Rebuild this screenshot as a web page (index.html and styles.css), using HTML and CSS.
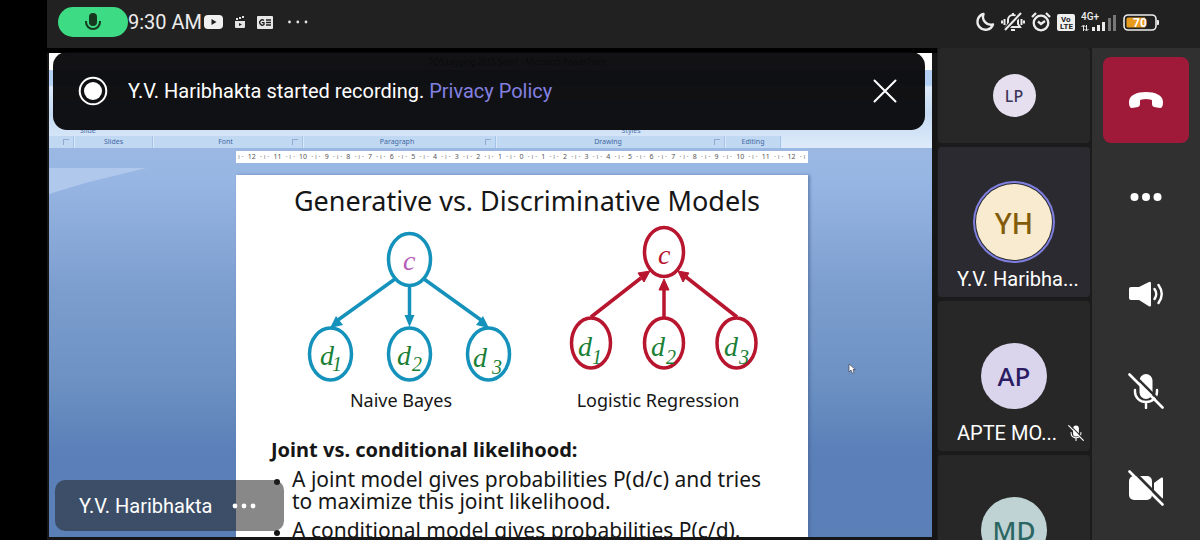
FILE: index.html
```html
<!DOCTYPE html>
<html lang="en">
<head>
<meta charset="utf-8">
<meta name="viewport" content="width=device-width, initial-scale=1">
<title>Meeting</title>
<link rel="stylesheet" href="styles.css">
</head>
<body>
<div class="app">
  <header class="status">
    <div class="status-left">
      <span class="mic-pill">
        <svg width="18" height="20" viewBox="0 0 18 20"><rect x="5" y="1" width="8" height="13" rx="4" fill="#17381f"/><path d="M2 9v1a7 7 0 0 0 14 0V9" fill="none" stroke="#17381f" stroke-width="2"/></svg>
      </span>
      <time class="clock">9:30 AM</time>
      <svg class="s-video" width="19" height="14" viewBox="0 0 19 14"><rect width="19" height="14" rx="4" fill="#f1f1f1"/><path d="M7.500 4v6l5-3z" fill="#222"/></svg>
      <svg class="s-clap" width="10" height="12" viewBox="0 0 10 12"><path d="M0 5h10v6q0 1-1 1H1q-1 0-1-1zM1 2h2v2H1zM4 1h2v2H4zM7 0h2v2H7z" fill="#e4e4e4"/><path d="M4 7v3l3-1.500z" fill="#222"/></svg>
      <svg class="s-news" width="16" height="13" viewBox="0 0 16 13"><rect width="16" height="13" rx="1" fill="#e8e8e8"/><path d="M7 4.500A2.600 2.600 0 1 0 7 8.500V6.700H4.800M9 4h5M9 6.500h5M9 9h5" fill="none" stroke="#222" stroke-width="1.300"/></svg>
      <svg class="s-more" width="20" height="4" viewBox="0 0 20 4" fill="#e4e4e4"><circle cx="1.500" cy="2" r="1.400"/><circle cx="9.800" cy="2" r="1.400"/><circle cx="18" cy="2" r="1.400"/></svg>
    </div>
    <div class="status-right">
      <svg width="20" height="20" viewBox="0 0 20 20"><path d="M8.500 2A8 8 0 1 0 18 12.500 8 8 0 0 1 8.500 2z" fill="none" stroke="#ececec" stroke-width="2.400" stroke-linejoin="round"/></svg>
      <svg width="24" height="20" viewBox="0 0 24 20" fill="none" stroke="#ececec" stroke-width="2"><path d="M5 15h14l-2-3V8a5 5 0 0 0-10 0v4z"/><path d="M10 18h4M12 3V1M3.500 7v6M1 8.500v3M20.500 7v6M23 8.500v3"/><path d="M20 1 4 18" stroke="#222" stroke-width="4.500"/><path d="M20 1 4 18"/></svg>
      <svg width="20" height="20" viewBox="0 0 20 20" fill="none" stroke="#ececec" stroke-width="2.300"><circle cx="10" cy="11" r="7.300"/><path d="M1 5l4-4M19 5l-4-4M7 9.500l3 2.500 4-3"/></svg>
      <svg width="18" height="17" viewBox="0 0 18 17"><rect width="18" height="17" rx="2" fill="#f0f0f0"/><text x="4" y="8" class="t-lte">Vo</text><text x="3" y="15" class="t-lte">LTE</text></svg>
      <svg class="s-signal" width="36" height="20" viewBox="0 0 36 20"><text x="0" y="8" class="t-4g">4G+</text><path d="M2.500 19v-5M5.500 13v5M0.500 15l2-2 2 2M3.500 17l2 2 2-2" stroke="#ececec" fill="none"/><path d="M11 15h3v4h-3zM16 13h3v6h-3zM21 10h3v9h-3z" fill="#ececec"/><path d="M27 6h3v13h-3zM32 3h3v16h-3z" fill="#777"/></svg>
      <svg class="s-battery" width="37" height="17" viewBox="0 0 37 17"><rect x="1" y="1" width="32" height="15" rx="4" fill="none" stroke="#ececec" stroke-width="1.600"/><path d="M5 3.500h17v10H5q-1.500 0-1.500-1.500V5Q3.500 3.500 5 3.500z" fill="#e89c1d"/><path d="M34 6h1q1 0 1 1v3q0 1-1 1h-1z" fill="#ececec"/><text x="17" y="13" text-anchor="middle" class="t-bat">70</text></svg>
    </div>
  </header>

  <div class="body">
    <main class="stage">
      <section class="shared">
        <div class="ribbon">
          <div class="win-title">POS tagging 2015 Sem1 - Microsoft PowerPoint</div>
          <div class="tools"><span class="t-slide">Slide</span><span class="t-styles">Styles</span></div>
          <div class="groups">
            <span class="more"></span><span>Slides</span><span class="more">Font</span><span class="more">Paragraph</span><span class="more">Drawing</span><span>Editing</span>
          </div>
        </div>
        <div class="desk">
          <div class="ruler"><i>ı ·</i>12<i>· ı ·</i>11<i>· ı ·</i>10<i>· ı ·</i>9<i>· ı ·</i>8<i>· ı ·</i>7<i>· ı ·</i>6<i>· ı ·</i>5<i>· ı ·</i>4<i>· ı ·</i>3<i>· ı ·</i>2<i>· ı ·</i>1<i>· ı ·</i>0<i>· ı ·</i>1<i>· ı ·</i>2<i>· ı ·</i>3<i>· ı ·</i>4<i>· ı ·</i>5<i>· ı ·</i>6<i>· ı ·</i>7<i>· ı ·</i>8<i>· ı ·</i>9<i>· ı ·</i>10<i>· ı ·</i>11<i>· ı ·</i>12<i>· ı</i></div>
          <article class="slide">
            <h1>Generative vs. Discriminative Models</h1>
            <svg class="diagram" viewBox="236 223 572 192">
              <g fill="none" stroke="#1592bb" stroke-width="3.500">
                <ellipse cx="409.500" cy="259.500" rx="21" ry="26"/><ellipse cx="330.500" cy="354" rx="21" ry="26"/><ellipse cx="409.500" cy="354" rx="21" ry="26"/><ellipse cx="488.500" cy="354" rx="21" ry="26"/>
                <path d="M395 279 338 320M409.500 286v32M424 279l57 41"/>
              </g>
              <path d="M330 328l6-12 7 9zM409.500 327l-5-12h10zM489 328l-6-12-7 9z" fill="#1592bb"/>
              <g fill="none" stroke="#b8152f" stroke-width="3.500">
                <ellipse cx="664" cy="252" rx="19.500" ry="24.500"/><ellipse cx="591" cy="343" rx="19.500" ry="25"/><ellipse cx="664" cy="343" rx="19.500" ry="25"/><ellipse cx="736.500" cy="343" rx="19.500" ry="25"/>
                <path d="M591 317l50-39M664 317v-32M737 317l-51-40"/>
              </g>
              <path d="M650 271l-6 11-6-9zM664 279l5 11h-10zM678 271l11 2-6 9z" fill="#b8152f" stroke="#b8152f"/>
              <g class="t-math">
                <text x="403" y="270" fill="#b65cb8">c</text>
                <text x="658" y="264" fill="#b8152f">c</text>
                <text x="320" y="365">d</text><text x="332" y="371" class="sub">1</text>
                <text x="397" y="365">d</text><text x="412" y="371" class="sub">2</text>
                <text x="473" y="367">d</text><text x="492" y="374" class="sub">3</text>
                <text x="578" y="356">d</text><text x="592" y="364" class="sub">1</text>
                <text x="651" y="356">d</text><text x="666" y="364" class="sub">2</text>
                <text x="724" y="356">d</text><text x="739" y="364" class="sub">3</text>
              </g>
              <g class="t-cap" text-anchor="middle"><text x="401" y="407">Naive Bayes</text><text x="658" y="407">Logistic Regression</text></g>
            </svg>
            <h2>Joint vs. conditional likelihood:</h2>
            <ul>
              <li>A joint model gives probabilities P(d/c) and tries<br>to maximize this joint likelihood.</li>
              <li>A conditional model gives probabilities P(c/d).</li>
            </ul>
          </article>
        </div>
        <svg class="cursor" width="8" height="12" viewBox="0 0 8 12"><path d="M1 1v8l2-2 1.500 3.500 1.500-1L5 6.500h2.500z" fill="#fff" stroke="#445" stroke-width=".7"/></svg>
      </section>

      <div class="banner">
        <svg width="30" height="30" viewBox="0 0 30 30"><circle cx="15" cy="15" r="13.300" fill="none" stroke="#fff" stroke-width="2"/><circle cx="15" cy="15" r="9" fill="#fff"/></svg>
        <p>Y.V. Haribhakta started recording. <a href="#privacy">Privacy Policy</a></p>
        <button class="close" aria-label="Close"><svg width="24" height="24" viewBox="0 0 24 24"><path d="M1.500 1.500l21 21M22.500 1.500l-21 21" stroke="#fff" stroke-width="2" stroke-linecap="round"/></svg></button>
      </div>

      <div class="presenter">
        <span>Y.V. Haribhakta</span>
        <button aria-label="Presenter options"><svg width="24" height="6" viewBox="0 0 24 6" fill="#fff"><circle cx="3" cy="3" r="2.400"/><circle cx="12" cy="3" r="2.400"/><circle cx="21" cy="3" r="2.400"/></svg></button>
      </div>
    </main>

    <aside class="people">
      <div class="tile small"><span class="avatar lp">LP</span></div>
      <div class="tile active">
        <div class="face"><span class="avatar yh">YH</span></div>
        <div class="name">Y.V. Haribha...</div>
      </div>
      <div class="tile">
        <div class="face"><span class="avatar ap">AP</span></div>
        <div class="name">APTE MO...
          <svg width="16" height="16" viewBox="0 0 36 36"><use href="#mic-off"/></svg>
        </div>
      </div>
      <div class="tile">
        <div class="face"><span class="avatar md">MD</span></div>
      </div>
    </aside>

    <nav class="controls">
      <button class="hangup" aria-label="Leave"><svg width="36" height="18" viewBox="0 0 36 18"><path d="M18 1C27 1 35 4 35 11q0 6-3 6l-6-1q-2-.500-2-3V9.500Q23 8 18 8t-6 1.500V13q0 2.500-2 3l-6 1q-3 0-3-6C1 4 9 1 18 1z" fill="#fff"/></svg></button>
      <button aria-label="More"><svg width="32" height="10" viewBox="0 0 32 10" fill="#fff"><circle cx="4.500" cy="5" r="4"/><circle cx="16" cy="5" r="4"/><circle cx="27.500" cy="5" r="4"/></svg></button>
      <button aria-label="Speaker"><svg width="36" height="28" viewBox="0 0 36 28"><path d="M3 7h8L20.500 2.300Q23 1 23 3.500v21.500q0 2.500-2.500 1L11 20H3q-2 0-2-2V9q0-2 2-2z" fill="#fff"/><path d="M26.500 9q3.500 5 0 10M30.500 5q6.500 9 0 18" fill="none" stroke="#fff" stroke-width="2.400" stroke-linecap="round"/></svg></button>
      <button aria-label="Unmute"><svg width="36" height="36" viewBox="0 0 36 36"><g id="mic-off"><rect x="11.500" y="1" width="13" height="25" rx="6.500" fill="#fff"/><path d="M7 17v2a11 10 0 0 0 22 0v-2M18 29v6" fill="none" stroke="#fff" stroke-width="2.400" stroke-linecap="round"/><path d="M3.500-.500l34 34" stroke="#303030" stroke-width="2.600"/><path d="M1.500 1.500l33 33" stroke="#fff" stroke-width="2.600" stroke-linecap="round"/></g></svg></button>
      <button aria-label="Turn camera on"><svg width="36" height="36" viewBox="0 0 36 36"><rect x="1" y="6" width="23" height="24" rx="5" fill="#fff"/><path d="M26 13l7.500-5.500Q35 7 35 8.500v19q0 1.500-1.500 1L26 23z" fill="#fff"/><path d="M3.500-.500l34 34" stroke="#303030" stroke-width="3"/><path d="M1.500 1.500l33 33" stroke="#fff" stroke-width="2.600" stroke-linecap="round"/></svg></button>
    </nav>
  </div>
</div>
</body>
</html>
```
FILE: styles.css
```css
* { box-sizing: border-box; }
body { margin: 0; background: #000; font-family: Roboto, sans-serif; font-size: 20px; color: #fff; }
button { border: 0; padding: 0; background: none; color: inherit; display: flex; align-items: center; justify-content: center; }
svg { display: block; flex: none; }

.app { height: 100vh; padding-left: 47px; display: flex; flex-direction: column; overflow: hidden; }

.status { flex: none; height: 48px; padding: 0 40px 4px 11px; background: #212121; display: flex; align-items: center; justify-content: space-between; }
.status-left, .status-right { display: flex; align-items: center; }
.status-right { gap: 6px; }
.mic-pill { width: 70px; height: 30px; border-radius: 15px; background: #3ddc84; display: flex; align-items: center; justify-content: center; }
.clock { color: #ececec; margin-right: 2px; line-height: 24px; }
.s-clap { margin-left: 12px; }
.s-news { margin-left: 12px; }
.s-more { margin-left: 15px; }
.t-lte { font: 700 8px Roboto, sans-serif; fill: #222; }
.t-4g { font: 500 10px Roboto, sans-serif; fill: #ececec; }
.t-bat { font: 700 12px Roboto, sans-serif; fill: #fff; }

.body { flex: 1; min-height: 0; display: flex; background: #1b1b1b; }
.stage { flex: 1; min-width: 0; position: relative; display: flex; padding: 5px 5px 3px 2px; background: linear-gradient(#000 5px, #161616 5px); }
.shared { flex: 1; min-width: 0; display: flex; flex-direction: column; overflow: hidden; position: relative; font-family: "Noto Sans", sans-serif; }

.ribbon { flex: none; height: 95px; display: flex; flex-direction: column; background: linear-gradient(#fff 0 17px, #b4d0f5 17px 32px, #dce9f8 34px, #c6dbf3 60px, #dceafa 94px); }
.win-title { text-align: center; font-size: 8px; line-height: 18px; color: #222; padding-left: 54px; }
.tools { margin-top: auto; display: flex; justify-content: space-between; padding: 0 33% 0 31px; font-size: 7px; line-height: 10px; color: #4d74ab; }
.groups { display: grid; grid-template-columns: 25fr 78fr 149fr 192fr 228fr 55fr 150fr; gap: 1px; }
.groups span { height: 12px; background: #c1d8f2; border-right: 1px solid #a5c3e8; font-size: 7px; line-height: 12px; text-align: center; color: #3f68a4; }
.groups .more { display: flex; align-items: center; justify-content: center; }
.groups .more::before { content: ""; width: 5px; margin-right: auto; }
.groups .more::after { content: ""; width: 5px; height: 5px; margin: 0 4px 0 auto; border: 1px solid #8fabd0; border-right: 0; border-bottom: 0; }

.desk { position: relative; flex: 1; min-height: 0; display: grid; grid-template-columns: 187fr 572fr 124fr; grid-template-rows: 12px 1fr; row-gap: 12px; padding-top: 3px; background: linear-gradient(#9ab8e2, #98b6e3 8%, #7d9fd0 35%, #6c91c2 60%, #5b80b9 78%, #5b80b8); }
.desk::before { content: ""; position: absolute; left: 0; top: 20px; width: 11%; height: 26px; background: #b0c8ec; clip-path: polygon(0 0, 100% 0, 40% 55%, 0 100%); }
.ruler, .slide { grid-column: 2; }
.ruler { background: #fff; display: flex; justify-content: space-between; align-items: center; font-size: 7px; line-height: 12px; color: #555; padding: 0 2px; white-space: nowrap; }
.ruler i { font-style: normal; color: #888; }
.slide { background: #fff; color: #161616; box-shadow: 2px 0 3px #45629399; min-height: 0; overflow: hidden; }
.slide h1 { margin: 0; padding: 6px 0 2px 10px; text-align: center; font: 400 27px/40px "Noto Sans", sans-serif; white-space: nowrap; }
.diagram { width: 100%; }
.t-math { font: italic 28px "Liberation Serif", serif; fill: #1a7f36; }
.t-math .sub { font-size: 20px; }
.t-cap { font: 400 18px "Noto Sans", sans-serif; fill: #161616; }
.slide h2 { margin: 0; padding: 22px 0 0 35px; font: 700 20px/26px "Noto Sans", sans-serif; white-space: nowrap; }
.slide ul { margin: 0; padding: 5px 0 0 56px; font-size: 21px; line-height: 22px; white-space: nowrap; }
.slide li { margin-bottom: 7px; }
.slide li::marker { font-size: 16px; }
.cursor { position: absolute; left: 799px; top: 310px; }

.banner { position: absolute; left: 6px; right: 12px; top: 4px; height: 78px; border-radius: 14px; background: rgba(8, 8, 10, .96); display: flex; align-items: center; padding: 0 28px 0 25px; }
.banner p { margin: 0 auto 0 20px; line-height: 24px; }
.banner a { color: #8280e0; text-decoration: none; }

.presenter { position: absolute; left: 8px; bottom: 9px; height: 51px; border-radius: 10px; background: rgba(35, 35, 35, .54); display: flex; align-items: center; gap: 20px; padding: 0 28px 0 24px; }

.people { flex: none; width: 155px; padding-left: 1px; padding-right: 2px; display: flex; flex-direction: column; gap: 4px; background: #1b1b1b; overflow: hidden; }
.tile { flex: none; height: 150px; padding-top: 34px; border-radius: 4px; background: #272727; }
.tile.small { height: 95px; padding: 0; display: flex; align-items: center; justify-content: center; }
.tile.active { background: #2b2a30; }
.face { height: 82px; display: flex; align-items: center; justify-content: center; }
.avatar { width: 66px; height: 66px; border-radius: 50%; display: flex; align-items: center; justify-content: center; font: 500 26px "Noto Sans", sans-serif; }
.lp { width: 43px; height: 43px; font-size: 16px; background: #e5dff0; color: #3b3657; }
.yh { width: 76px; height: 76px; font-size: 29px; background: #f8ebcf; color: #835c0b; box-shadow: 0 0 0 1px #2b2a30, 0 0 0 3px #7f7fdf; }
.ap { background: #dad5ec; color: #2b1c63; }
.md { background: #bfd3d4; color: #2b6662; }
.name { display: flex; align-items: center; justify-content: space-between; margin-top: 4px; padding: 0 6px 0 19px; line-height: 24px; white-space: nowrap; }

.controls { flex: none; width: 108px; padding: 9px 11px 0; background: #303030; display: flex; flex-direction: column; gap: 11px; }
.controls button { height: 86px; width: 100%; flex: none; }
.controls .hangup { background: #9f1a39; border-radius: 8px; }
```
